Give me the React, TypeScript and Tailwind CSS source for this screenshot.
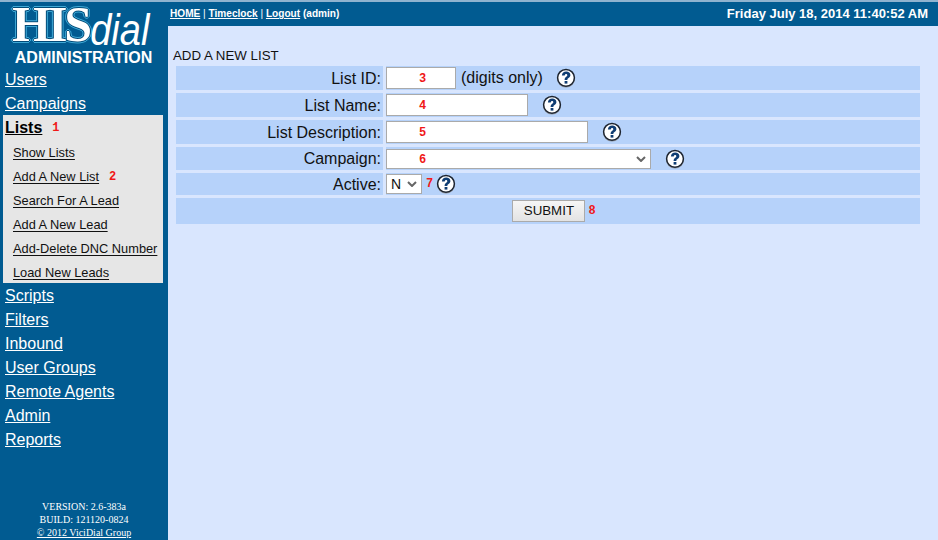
const sans = "font-['Liberation_Sans',Arial,sans-serif]"
const mono = "font-['Liberation_Mono','DejaVu_Sans_Mono',monospace]"

function Mark({ n, className = '' }: { n: string; className?: string }) {
  return <span className={`${mono} text-[12px] font-bold leading-none text-[#f01818] ${className}`}>{n}</span>
}

function Help({ className = '' }: { className?: string }) {
  return (
    <svg viewBox="0 0 20 20" className={`size-[20px] shrink-0 ${className}`}>
      <circle cx="10" cy="10.6" r="9" fill="#8a8f98" />
      <circle cx="10" cy="9.8" r="8.4" fill="#fff" stroke="#1c2430" strokeWidth="1.5" />
      <path d="M5.9 7.6C6 5 7.8 3.6 10.2 3.6c2.5 0 4.2 1.4 4.2 3.5 0 1.5-.8 2.3-1.9 3-.9.6-1.1 1-1.1 1.9H8.6c0-1.6.4-2.4 1.4-3.1.8-.6 1.3-1 1.3-1.6 0-.7-.5-1.2-1.2-1.2-.8 0-1.3.6-1.4 1.5z" fill="#0f3d73" />
      <rect x="8.6" y="13" width="2.8" height="2.6" fill="#0f3d73" />
    </svg>
  )
}

function Chevron({ className = '' }: { className?: string }) {
  return (
    <svg viewBox="0 0 10 6" className={`h-[6px] w-[10px] ${className}`}>
      <path d="M1 1l4 4 4-4" fill="none" stroke="#666" strokeWidth="2" />
    </svg>
  )
}

function Row({ label, h, children }: { label: string; h: string; children: React.ReactNode }) {
  return (
    <div className={`flex gap-[3px] ${h}`}>
      <div className="flex w-[207px] items-center justify-end bg-[#b6d2fa] pt-[1px] pr-[2px] text-[16px] text-[#111]">{label}</div>
      <div className="flex flex-1 items-center bg-[#b6d2fa]">{children}</div>
    </div>
  )
}

function Field({ w, n }: { w: string; n: string }) {
  return (
    <div className={`flex h-[22px] items-center border border-[#aaa] bg-white pt-[2px] pl-[32px] ${w}`}>
      <Mark n={n} />
    </div>
  )
}

function NavLink({ label }: { label: string }) {
  return <a className="block h-[24px] pl-[5px] text-[16px] leading-[24px] text-white underline">{label}</a>
}

function SubLink({ label, mark }: { label: string; mark?: string }) {
  return (
    <div className="flex h-[24px] items-center pt-[4px] pl-[10px] text-[12.8px] text-[#111]">
      <a className="underline underline-offset-2">{label}</a>
      {mark && <Mark n={mark} className="ml-[10px]" />}
    </div>
  )
}

export default function App() {
  return (
    <div className={`${sans} flex h-[540px] w-[938px] overflow-hidden bg-[#d9e6fe]`}>
      <aside className="flex w-[168px] shrink-0 flex-col border-t-2 border-t-[#8fb3cf] bg-[#015b91]">
        <div className="flex h-[45px] items-end pl-[12px]">
          <span className="font-['Liberation_Serif',serif] text-[50px] leading-[46px] font-bold tracking-[-3px] text-white [text-shadow:1px_0_0_#014a78,-1px_0_0_#014a78,0_1px_0_#014a78,0_-1px_0_#014a78,2px_0_0_#3fa9d6,-2px_0_0_#3fa9d6,0_2px_0_#3fa9d6,0_-2px_0_#3fa9d6,1px_1px_0_#3fa9d6,-1px_-1px_0_#3fa9d6,1px_-1px_0_#3fa9d6,-1px_1px_0_#3fa9d6]">
            HIS
          </span>
          <span className="ml-[1px] origin-bottom translate-y-[7px] scale-y-[1.15] text-[38px] leading-[42px] text-white italic">dial</span>
        </div>
        <div className="mt-[1px] h-[20px] pr-[1px] text-center text-[16px] leading-[20px] font-bold text-white">ADMINISTRATION</div>
        <div>
          <NavLink label="Users" />
          <NavLink label="Campaigns" />
        </div>
        <div className="mt-[-1px] mr-[5px] mb-[1px] ml-[3px] bg-[#e6e6e6]">
          <div className="flex h-[24px] items-center pt-[2px] pl-[2px] text-[16px] font-bold text-black">
            <a className="underline">Lists</a>
            <Mark n="1" className="ml-[10px]" />
          </div>
          <SubLink label="Show Lists" />
          <SubLink label="Add A New List" mark="2" />
          <SubLink label="Search For A Lead" />
          <SubLink label="Add A New Lead" />
          <SubLink label="Add-Delete DNC Number" />
          <SubLink label="Load New Leads" />
        </div>
        <div>
          {['Scripts', 'Filters', 'Inbound', 'User Groups', 'Remote Agents', 'Admin', 'Reports'].map((l) => (
            <NavLink key={l} label={l} />
          ))}
        </div>
        <div className="mt-auto pb-[1px] text-center font-['Liberation_Serif',serif] text-[10px] leading-[13px] text-white">
          <div>VERSION: 2.6-383a</div>
          <div>BUILD: 121120-0824</div>
          <a className="underline">© 2012 ViciDial Group</a>
        </div>
      </aside>

      <main className="flex min-w-0 flex-1 flex-col">
        <header className="flex h-[26px] items-center justify-between border-t-2 border-t-[#8fb3cf] bg-[#015b91] pr-[10px] pl-[2px] text-white">
          <div className="text-[10.1px] font-bold">
            <a className="underline">HOME</a>
            <span className="font-normal"> | </span>
            <a className="underline">Timeclock</a>
            <span className="font-normal"> | </span>
            <a className="underline">Logout</a> (admin)
          </div>
          <div className="text-[13px] font-bold">Friday July 18, 2014 11:40:52 AM</div>
        </header>

        <div className="pt-[22px] pl-[5px] text-[13.3px] leading-[16px] text-[#111]">ADD A NEW LIST</div>
        <div className="mt-[2px] ml-[8px] flex w-[744px] flex-col gap-[3px]">
          <Row label="List ID:" h="h-[24px]">
            <Field w="w-[70px]" n="3" />
            <span className="ml-[5px] text-[16px] text-[#111]">(digits only)</span>
            <Help className="ml-[13px]" />
          </Row>
          <Row label="List Name:" h="h-[24px]">
            <Field w="w-[142px]" n="4" />
            <Help className="ml-[14px]" />
          </Row>
          <Row label="List Description:" h="h-[24px]">
            <Field w="w-[202px]" n="5" />
            <Help className="ml-[14px]" />
          </Row>
          <Row label="Campaign:" h="h-[23px]">
            <div className="flex h-[20px] w-[265px] items-center justify-between border border-[#aaa] bg-white pr-[4px] pl-[32px]">
              <Mark n="6" className="mt-[2px]" />
              <Chevron />
            </div>
            <Help className="ml-[14px]" />
          </Row>
          <Row label="Active:" h="h-[22px]">
            <div className="flex h-[20px] w-[36px] items-center justify-between border border-[#aaa] bg-white px-[4px] text-[14px] text-[#111]">
              N
              <Chevron />
            </div>
            <Mark n="7" className="ml-[4px]" />
            <Help className="ml-[3px]" />
          </Row>
          <div className="flex h-[26px] items-center justify-center gap-[3px] bg-[#b6d2fa] pl-[12px]">
            <button className="flex h-[22px] w-[73px] items-center justify-center border border-[#aaa] bg-gradient-to-b from-[#f6f6f6] to-[#e3e3e3] text-[13.3px] text-[#111]">
              SUBMIT
            </button>
            <Mark n="8" />
          </div>
        </div>
      </main>
    </div>
  )
}
